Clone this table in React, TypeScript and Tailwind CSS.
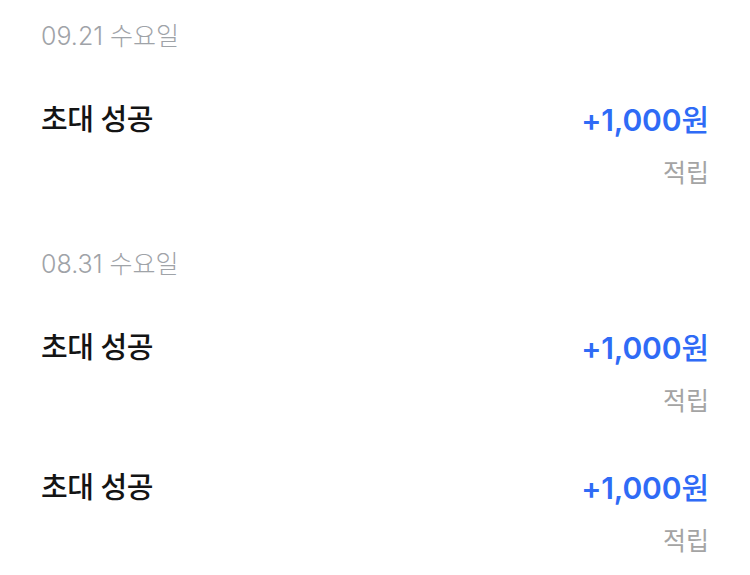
const sections = [
  {
    date: "09.21 수요일",
    items: [{ title: "초대 성공", amount: "+1,000", note: "적립" }],
  },
  {
    date: "08.31 수요일",
    items: [
      { title: "초대 성공", amount: "+1,000", note: "적립" },
      { title: "초대 성공", amount: "+1,000", note: "적립" },
    ],
  },
];

export default function App() {
  return (
    <div
      className="w-[750px] h-[575px] overflow-hidden bg-white px-[41px]"
      style={{ fontFamily: 'Inter, "Noto Sans CJK KR", sans-serif' }}
    >
      {sections.map((s, i) => (
        <section key={i} className={i === 0 ? "pt-[22px]" : "pt-[28px]"}>
          <div className="h-[30px] flex items-center text-[25px] font-light text-[#9fa3a8]">
            {s.date}
          </div>
          <div className="pt-[30px]">
            {s.items.map((it, j) => (
              <div key={j} className="flex justify-between pt-[20px] h-[140px]">
                <div className="h-[36px] flex items-center text-[29px] font-medium text-[#141414] tracking-[-0.5px]">
                  {it.title}
                </div>
                <div className="flex flex-col items-end gap-[21px]">
                  <div className="h-[36px] flex items-center text-[30px] font-semibold text-[#2f6bf6] tracking-[-0.1px]">
                    {it.amount}
                    <span className="font-medium">원</span>
                  </div>
                  <div className="h-[30px] flex items-center text-[25px] text-[#a4a4a4]">
                    {it.note}
                  </div>
                </div>
              </div>
            ))}
          </div>
        </section>
      ))}
    </div>
  );
}
